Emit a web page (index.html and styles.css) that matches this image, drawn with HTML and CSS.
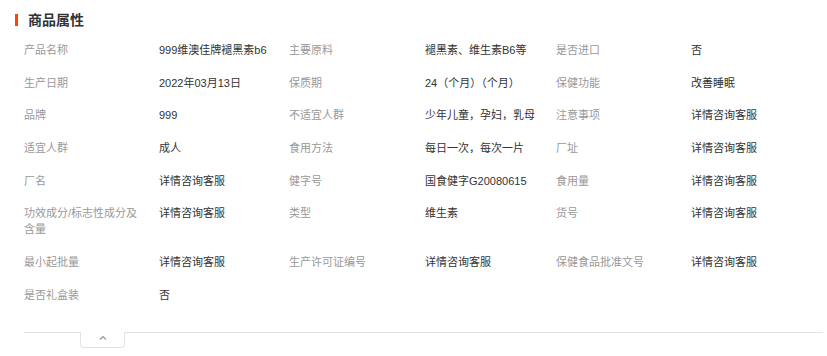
FILE: index.html
```html
<!DOCTYPE html>
<html lang="zh-CN">
<head>
<meta charset="utf-8">
<title>商品属性</title>
<link rel="stylesheet" href="styles.css">
</head>
<body>
<div class="panel">
  <h2 class="title">商品属性</h2>
  <div class="attrs">
    <div class="k">产品名称</div><div class="v">999维澳佳牌褪黑素b6</div>
    <div class="k">主要原料</div><div class="v">褪黑素、维生素B6等</div>
    <div class="k">是否进口</div><div class="v">否</div>

    <div class="k">生产日期</div><div class="v">2022年03月13日</div>
    <div class="k">保质期</div><div class="v">24（个月）（个月）</div>
    <div class="k">保健功能</div><div class="v">改善睡眠</div>

    <div class="k">品牌</div><div class="v">999</div>
    <div class="k">不适宜人群</div><div class="v">少年儿童，孕妇，乳母</div>
    <div class="k">注意事项</div><div class="v">详情咨询客服</div>

    <div class="k">适宜人群</div><div class="v">成人</div>
    <div class="k">食用方法</div><div class="v">每日一次，每次一片</div>
    <div class="k">厂址</div><div class="v">详情咨询客服</div>

    <div class="k">厂名</div><div class="v">详情咨询客服</div>
    <div class="k">健字号</div><div class="v">国食健字G20080615</div>
    <div class="k">食用量</div><div class="v">详情咨询客服</div>

    <div class="k">功效成分/标志性成分及含量</div><div class="v">详情咨询客服</div>
    <div class="k">类型</div><div class="v">维生素</div>
    <div class="k">货号</div><div class="v">详情咨询客服</div>

    <div class="k">最小起批量</div><div class="v">详情咨询客服</div>
    <div class="k">生产许可证编号</div><div class="v">详情咨询客服</div>
    <div class="k">保健食品批准文号</div><div class="v">详情咨询客服</div>

    <div class="k">是否礼盒装</div><div class="v">否</div>
  </div>
  <div class="fold">
    <div class="fold-tab">
      <svg width="8" height="5" viewBox="0 0 8 5"><path d="M1 4.5 L4 1.5 L7 4.5" fill="none" stroke="#999" stroke-width="1.2"/></svg>
    </div>
  </div>
</div>
</body>
</html>
```
FILE: styles.css
```css
html, body {
  margin: 0;
  padding: 0;
  background: #fff;
}
body {
  font-family: "Liberation Sans", "Noto Sans CJK SC", sans-serif;
  font-size: 11px;
  color: #333;
}
.panel {
  width: 823px;
  padding-top: 10px;
}
.title {
  margin: 4px 0 0 15px;
  padding-left: 10px;
  border-left: 3px solid #ff4400;
  font-size: 14px;
  line-height: 12px;
  font-weight: bold;
  color: #333;
  height: 12px;
}
.attrs {
  margin: 16px 0 0 24px;
  display: grid;
  grid-template-columns: 135px 130px 136px 131px 135px 1fr;
  row-gap: 16.7px;
  line-height: 16px;
}
.k {
  color: #999;
  padding-right: 15px;
}
.v {
  color: #333;
  padding-right: 8px;
}
.fold {
  margin: 29px 0 0 24px;
  border-top: 1px solid #e3e3e3;
  height: 20px;
}
.fold-tab {
  margin: -1px 0 0 56px;
  width: 45px;
  height: 16px;
  background: #fff;
  border: 1px solid #e3e3e3;
  border-top: none;
  border-radius: 0 0 4px 4px;
  display: flex;
  justify-content: center;
  padding-top: 3px;
  box-sizing: border-box;
}
.fold-tab svg {
  display: block;
}
```
